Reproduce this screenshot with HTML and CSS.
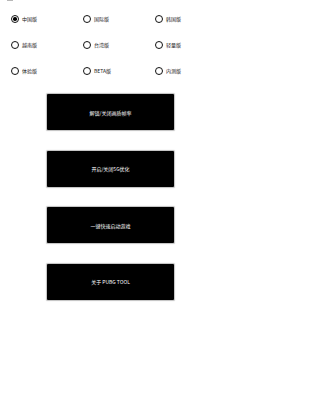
FILE: index.html
```html
<!DOCTYPE html>
<html lang="zh-CN">
<head>
<meta charset="utf-8">
<title>PUBG TOOL</title>
<link rel="stylesheet" href="styles.css">
</head>
<body>
<div class="topmark"></div>
<div class="versions">
  <label class="opt"><span class="radio checked"></span><span class="lbl">中国版</span></label>
  <label class="opt"><span class="radio"></span><span class="lbl">国际版</span></label>
  <label class="opt"><span class="radio"></span><span class="lbl">韩国版</span></label>
  <label class="opt"><span class="radio"></span><span class="lbl">越南版</span></label>
  <label class="opt"><span class="radio"></span><span class="lbl">台湾版</span></label>
  <label class="opt"><span class="radio"></span><span class="lbl">轻量版</span></label>
  <label class="opt"><span class="radio"></span><span class="lbl">体验版</span></label>
  <label class="opt"><span class="radio"></span><span class="lbl">BETA版</span></label>
  <label class="opt"><span class="radio"></span><span class="lbl">内测版</span></label>
</div>
<div class="actions">
  <div class="btn">解锁/关闭画质帧率</div>
  <div class="btn">开启/关闭5G优化</div>
  <div class="btn">一键快速启动游戏</div>
  <div class="btn">关于 PUBG TOOL</div>
</div>
</body>
</html>
```

FILE: styles.css
```css
html, body {
  margin: 0;
  padding: 0;
  background: #ffffff;
}
body {
  width: 226px;
  height: 400px;
  position: relative;
  font-family: "Noto Sans CJK SC", "Noto Sans", sans-serif;
  overflow: hidden;
}
.topmark {
  position: absolute;
  left: 7px;
  top: 0;
  width: 6px;
  height: 1px;
  background: #b8b8b8;
}
.versions {
  display: grid;
  grid-template-columns: 72px 72px 72px;
  grid-auto-rows: 26px;
  padding: 6px 0 0 11px;
}
.opt {
  display: flex;
  align-items: center;
  gap: 3px;
}
.radio {
  box-sizing: border-box;
  width: 8px;
  height: 8px;
  border: 1.4px solid #111;
  border-radius: 50%;
  display: flex;
  align-items: center;
  justify-content: center;
}
.radio.checked::after {
  content: "";
  width: 3.6px;
  height: 3.6px;
  border-radius: 50%;
  background: #000;
}
.lbl {
  font-size: 5px;
  color: #1a1a1a;
  line-height: 8px;
}
.actions {
  display: flex;
  flex-direction: column;
  align-items: flex-start;
  gap: 20.5px;
  margin: 10px 0 0 47px;
}
.btn {
  width: 127px;
  height: 36px;
  background: #000;
  color: #fff;
  font-size: 5px;
  display: flex;
  align-items: center;
  justify-content: center;
  border-radius: 1px;
  box-shadow: 0 0 1px 0.5px rgba(0,0,0,0.25);
}
```
